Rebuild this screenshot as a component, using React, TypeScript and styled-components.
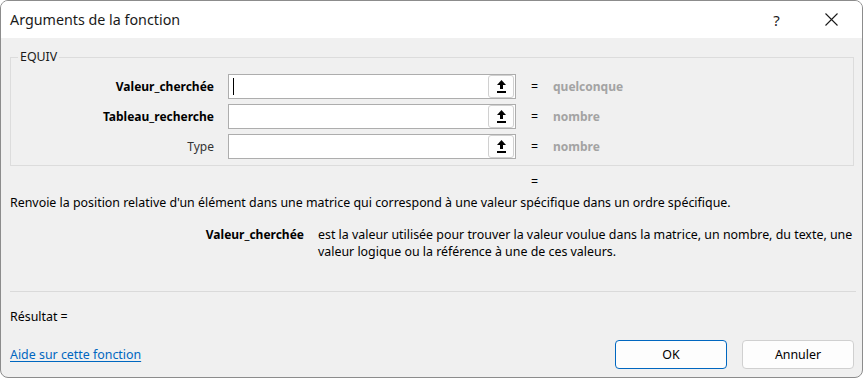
import styled, { createGlobalStyle } from 'styled-components';

const GlobalStyle = createGlobalStyle`
	html, body {
		margin: 0;
		background: #ffffff;
	}
	* {
		box-sizing: border-box;
	}
`;

const args = [
	{ name: 'Valeur_cherchée', value: 'quelconque', bold: true, focused: true },
	{ name: 'Tableau_recherche', value: 'nombre', bold: true, focused: false },
	{ name: 'Type', value: 'nombre', bold: false, focused: false },
];

function RefIcon() {
	return (
		<svg width="9" height="13" viewBox="0 0 9 13">
			<polygon points="4.5,0 9,5 0,5" fill="#000" />
			<rect x="3" y="4" width="3" height="5" fill="#000" />
			<rect x="0" y="11" width="9" height="2" fill="#000" />
		</svg>
	);
}

function App() {
	return (
		<>
			<GlobalStyle />
			<Window>
				<TitleBar>
					<Title>Arguments de la fonction</Title>
					<TitleButton>?</TitleButton>
					<TitleButton>
						<svg width="13" height="13" viewBox="0 0 13 13">
							<path d="M0.5 0.5 L12.5 12.5 M12.5 0.5 L0.5 12.5" stroke="#1a1a1a" strokeWidth="1.1" />
						</svg>
					</TitleButton>
				</TitleBar>
				<Body>
					<GroupBox>
						<Legend>EQUIV</Legend>
						{args.map((arg) => (
							<ArgRow key={arg.name}>
								<ArgLabel $bold={arg.bold}>{arg.name}</ArgLabel>
								<RefInput>
									{arg.focused && <Caret />}
									<RefButton>
										<RefIcon />
									</RefButton>
								</RefInput>
								<Equals>=</Equals>
								<ArgValue>{arg.value}</ArgValue>
							</ArgRow>
						))}
					</GroupBox>
					<ResultLine>=</ResultLine>
					<Description>
						Renvoie la position relative d'un élément dans une matrice qui correspond à une valeur spécifique dans un ordre spécifique.
					</Description>
					<ArgHelp>
						<ArgHelpName>Valeur_cherchée</ArgHelpName>
						<ArgHelpText>
							est la valeur utilisée pour trouver la valeur voulue dans la matrice, un nombre, du texte, une valeur logique ou la référence à une de ces valeurs.
						</ArgHelpText>
					</ArgHelp>
					<Separator />
					<Result>Résultat =</Result>
					<Footer>
						<HelpLink href="#">Aide sur cette fonction</HelpLink>
						<DialogButton $primary>OK</DialogButton>
						<DialogButton>Annuler</DialogButton>
					</Footer>
				</Body>
			</Window>
		</>
	);
}

const Window = styled.div`
	display: flex;
	flex-direction: column;
	width: 863px;
	height: 378px;
	border: 1px solid #8c8c8c;
	border-radius: 8px;
	overflow: hidden;
	font-family: 'Noto Sans', 'DejaVu Sans', sans-serif;
	font-size: 12.4px;
	color: #000;
	background: #f0f0f0;
`;

const TitleBar = styled.div`
	display: flex;
	align-items: center;
	height: 37px;
	padding-left: 9px;
	background: #ffffff;
`;

const Title = styled.div`
	flex: 1;
	font-size: 14.3px;
	color: #1a1a1a;
`;

const TitleButton = styled.div`
	display: flex;
	align-items: center;
	justify-content: center;
	width: 56px;
	height: 37px;
	padding-left: 3px;
	font-size: 15px;
	color: #1a1a1a;
	&:last-child {
		width: 59px;
		padding: 0 3px 0 0;
	}
`;

const Body = styled.div`
	display: flex;
	flex-direction: column;
	flex: 1;
	padding: 0 8px 0 9px;
`;

const GroupBox = styled.fieldset`
	display: flex;
	flex-direction: column;
	gap: 5px;
	margin: 11px 0 0;
	padding: 9px 0 6px;
	border: 1px solid #dcdcdc;
	min-width: 0;
`;

const Legend = styled.legend`
	margin-left: 7px;
	padding: 0 2px;
	line-height: 16px;
	color: #1a1a1a;
`;

const ArgRow = styled.div`
	display: flex;
	align-items: center;
	height: 25px;
`;

const ArgLabel = styled.div<{ $bold: boolean }>`
	width: 203px;
	text-align: right;
	font-size: 12px;
	font-weight: ${({ $bold }) => ($bold ? 700 : 400)};
	color: ${({ $bold }) => ($bold ? '#000' : '#333')};
`;

const RefInput = styled.div`
	position: relative;
	display: flex;
	align-items: center;
	justify-content: flex-end;
	width: 288px;
	height: 25px;
	margin-left: 14px;
	padding: 0 1px 0 0;
	background: #ffffff;
	border: 1px solid #adadad;
`;

const Caret = styled.span`
	position: absolute;
	left: 4px;
	top: 3px;
	width: 1px;
	height: 17px;
	background: #000;
`;

const RefButton = styled.div`
	display: flex;
	align-items: center;
	justify-content: center;
	width: 26px;
	height: 23px;
	background: #fdfdfd;
	border: 1px solid #d0d0d0;
	border-radius: 3px;
`;

const Equals = styled.div`
	width: 22px;
	margin-left: 15px;
	color: #000;
`;

const ArgValue = styled.div`
	font-size: 12px;
	font-weight: 700;
	color: #a3a3a3;
`;

const ResultLine = styled.div`
	margin: 8px 0 0 521px;
	line-height: 16px;
`;

const Description = styled.div`
	margin-top: 5px;
	line-height: 16px;
`;

const ArgHelp = styled.div`
	display: grid;
	grid-template-columns: 294px 1fr;
	column-gap: 14px;
	margin: 15px -8px 0 0;
	line-height: 17px;
`;

const ArgHelpName = styled.div`
	text-align: right;
	font-size: 12px;
	font-weight: 700;
`;

const ArgHelpText = styled.div``;

const Separator = styled.div`
	height: 1px;
	margin: 31px -2px 0 0;
	background: #dadada;
`;

const Result = styled.div`
	margin-top: 17px;
	line-height: 16px;
`;

const Footer = styled.div`
	display: flex;
	align-items: center;
	gap: 15px;
	margin-top: 15px;
`;

const HelpLink = styled.a`
	flex: 1;
	color: #0067c0;
	text-decoration: underline;
	text-underline-offset: 2px;
`;

const DialogButton = styled.button<{ $primary?: boolean }>`
	width: 112px;
	height: 29px;
	font-family: inherit;
	font-size: 12.4px;
	color: #000;
	background: #fdfdfd;
	border: 1px solid ${({ $primary }) => ($primary ? '#0067c0' : '#d0d0d0')};
	border-radius: 4px;
`;

export default App;
